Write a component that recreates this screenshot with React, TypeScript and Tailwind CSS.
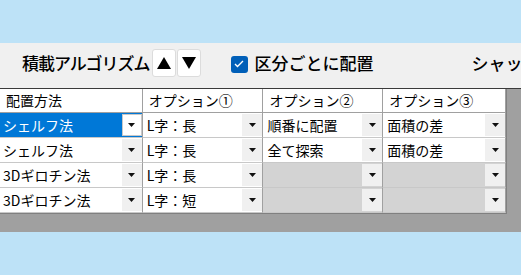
import React from "react";

const jp = { fontFamily: '"Noto Sans CJK JP", "Noto Sans", sans-serif' };

type Cell = { text: string; disabled?: boolean; selected?: boolean };

const widths = ["w-[143px]", "w-[121px]", "w-[120px]", "w-[123px]"];
const headers = ["配置方法", "オプション①", "オプション②", "オプション③"];

const rows: Cell[][] = [
  [{ text: "シェルフ法", selected: true }, { text: "L字：長" }, { text: "順番に配置" }, { text: "面積の差" }],
  [{ text: "シェルフ法" }, { text: "L字：長" }, { text: "全て探索" }, { text: "面積の差" }],
  [{ text: "3Dギロチン法" }, { text: "L字：長" }, { text: "", disabled: true }, { text: "", disabled: true }],
  [{ text: "3Dギロチン法" }, { text: "L字：短" }, { text: "", disabled: true }, { text: "", disabled: true }],
];

function Arrow() {
  return (
    <svg width="7" height="4" viewBox="0 0 7 4">
      <path d="M0 0h7L3.5 4z" fill="#111" />
    </svg>
  );
}

function GridCell({ cell, col }: { cell: Cell; col: number }) {
  const bg = cell.selected ? "bg-[#0078d7] text-white" : cell.disabled ? "bg-[#d3d3d3]" : "bg-white";
  return (
    <div className={`${widths[col]} h-[25px] flex border-r border-b border-r-[#a0a0a0] border-b-[#c8c8c8] ${bg}`}>
      <div className={`flex-1 flex items-center text-[14px] whitespace-nowrap ${col === 0 ? "pl-[3px]" : "pl-[4px]"}`}>
        {cell.text}
      </div>
      <div
        className={`w-[20px] my-[1px] flex items-center justify-center ${
          cell.selected ? "bg-white border border-[#c8c8c8]" : "bg-[#f0f0f0]"
        }`}
      >
        <Arrow />
      </div>
    </div>
  );
}

export default function App() {
  return (
    <div className="w-[521px] h-[275px] bg-[#bde2f7] pt-[43px] overflow-hidden text-black" style={jp}>
      <div className="h-[46px] bg-[#f0f0f0] border-b border-[#3a3a3a] flex items-center pb-[6px] pl-[22px] overflow-hidden whitespace-nowrap">
        <span className="text-[17px] font-medium tracking-[-1px]">積載アルゴリズム</span>
        <div className="flex gap-px ml-[2px]">
          <button className="w-[24px] h-[28px] bg-white border border-[#dcdcdc] rounded-[3px] flex items-center justify-center">
            <svg width="14" height="12" viewBox="0 0 14 12">
              <path d="M7 0L14 12H0z" fill="#000" />
            </svg>
          </button>
          <button className="w-[24px] h-[28px] bg-white border border-[#dcdcdc] rounded-[3px] flex items-center justify-center">
            <svg width="14" height="12" viewBox="0 0 14 12">
              <path d="M0 0H14L7 12z" fill="#000" />
            </svg>
          </button>
        </div>
        <div className="ml-[30px] mt-[3px] w-[17px] h-[17px] shrink-0 rounded-[3px] bg-[#005fb8] flex items-center justify-center">
          <svg width="10" height="8" viewBox="0 0 10 8">
            <path d="M1 4l2.5 2.5L9 1" stroke="#fff" strokeWidth="1.4" fill="none" />
          </svg>
        </div>
        <span className="ml-[7px] text-[17px] font-medium">区分ごとに配置</span>
        <span className="ml-[98px] text-[17px] font-medium">シャッフル</span>
      </div>

      <div className="h-[143px] bg-[#a0a0a0]">
        <div className="w-[507px] border-r border-b border-[#808080]">
          <div className="flex">
            {headers.map((h, i) => (
              <div
                key={h}
                className={`${widths[i]} h-[24px] bg-white border-r border-b border-r-[#a0a0a0] border-b-[#a0a0a0] flex items-center pl-[6px] text-[14px]`}
              >
                {h}
              </div>
            ))}
          </div>
          {rows.map((r, ri) => (
            <div key={ri} className="flex">
              {r.map((c, ci) => (
                <GridCell key={ci} cell={c} col={ci} />
              ))}
            </div>
          ))}
        </div>
      </div>
    </div>
  );
}
